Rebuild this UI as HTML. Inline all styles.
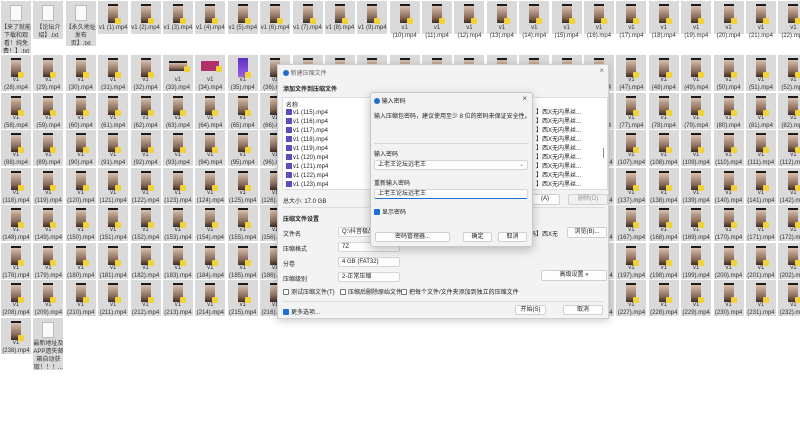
<!DOCTYPE html>
<html><head><meta charset="utf-8"><style>
*{box-sizing:border-box;margin:0;padding:0}
body{width:800px;height:425px;background:#fff;position:relative;overflow:hidden;font-family:"Liberation Sans","Noto Sans CJK SC",sans-serif;}
.row{position:absolute;left:1px;display:flex;align-items:flex-start}
.t{position:relative;width:30px;height:36px;background:#dadada;margin-right:2.4px;flex:none;font-size:6px;text-align:center;line-height:8px;color:#333}
.t b{position:absolute;left:10px;top:3px;width:10px;height:19px;background:linear-gradient(#1a1a1a 0 2px,#d8c0ae 2px,#8a6a58 70%,#3a2a22)}
.t b:after{content:"";position:absolute;right:-3px;bottom:-1px;width:6px;height:6px;background:#f2d23a;border-radius:1px}
.t span{position:absolute;left:0;right:0;top:21px}
.r1 .t{height:33px}
.r1 .t span{top:23px}
.x{background:#dadada}
.x i{position:absolute;left:9px;top:4px;width:12px;height:16px;background:#fafafa;border:1px solid #bbb}
.x span{top:22px}
.dlg{position:absolute;background:#f3f3f3;border:1px solid #cfcfcf;font-size:6px;color:#222}
.ab{position:absolute;white-space:nowrap}
.btn{position:absolute;background:#fdfdfd;border:1px solid #d0d0d0;border-radius:2px;text-align:center;font-size:6px;line-height:9px}
.inp{position:absolute;background:#fdfdfd;border:1px solid #d6d6d6;border-radius:2px;font-size:6px;line-height:8px;padding-left:3px}
.cb{display:inline-block;width:6px;height:6px;border:1px solid #777;border-radius:1px;vertical-align:-1px;margin-right:2px;background:#fff}
.cb.on{background:#1f6fd0;border-color:#1f6fd0}
.ic{display:inline-block;width:6px;height:6px;border-radius:50%;background:#1f6fd0;vertical-align:-1px}
.li{position:absolute;left:3px;font-size:6px;white-space:nowrap}
.li:before{content:"";display:inline-block;width:6px;height:6px;background:#5a4fc0;margin-right:1px;vertical-align:-1px}
</style></head><body>

<div class="row r1" style="top:1px">
<div class="t x" style="height:52px"><i></i><span>【来了就能下载和观看！纯免费！】.txt</span></div>
<div class="t x" style="height:38px"><i></i><span>【论坛介绍】.txt</span></div>
<div class="t x" style="height:45px"><i></i><span>【永久地址发布页】.txt</span></div>
<div class="t"><b></b><span>v1 (1).mp4</span></div><div class="t"><b></b><span>v1 (2).mp4</span></div><div class="t"><b></b><span>v1 (3).mp4</span></div><div class="t"><b></b><span>v1 (4).mp4</span></div><div class="t"><b></b><span>v1 (5).mp4</span></div><div class="t"><b></b><span>v1 (6).mp4</span></div><div class="t"><b></b><span>v1 (7).mp4</span></div><div class="t"><b></b><span>v1 (8).mp4</span></div><div class="t"><b></b><span>v1 (9).mp4</span></div>
<div class="t"><b></b><span>v1<br>(10).mp4</span></div><div class="t"><b></b><span>v1<br>(11).mp4</span></div><div class="t"><b></b><span>v1<br>(12).mp4</span></div><div class="t"><b></b><span>v1<br>(13).mp4</span></div><div class="t"><b></b><span>v1<br>(14).mp4</span></div><div class="t"><b></b><span>v1<br>(15).mp4</span></div><div class="t"><b></b><span>v1<br>(16).mp4</span></div><div class="t"><b></b><span>v1<br>(17).mp4</span></div><div class="t"><b></b><span>v1<br>(18).mp4</span></div><div class="t"><b></b><span>v1<br>(19).mp4</span></div><div class="t"><b></b><span>v1<br>(20).mp4</span></div><div class="t"><b></b><span>v1<br>(21).mp4</span></div><div class="t"><b></b><span>v1<br>(22).mp4</span></div>
</div>

<div class="row" style="top:55px">
<div class="t"><b></b><span>v1<br>(28).mp4</span></div><div class="t"><b></b><span>v1<br>(29).mp4</span></div><div class="t"><b></b><span>v1<br>(30).mp4</span></div><div class="t"><b></b><span>v1<br>(31).mp4</span></div><div class="t"><b></b><span>v1<br>(32).mp4</span></div><div class="t"><b style="left:6px;top:6px;width:18px;height:10px"></b><span>v1<br>(33).mp4</span></div><div class="t"><b style="left:6px;top:6px;width:18px;height:10px;background:#b0306a"></b><span>v1<br>(34).mp4</span></div><div class="t"><b style="background:linear-gradient(#5a30c0,#9a60e0)"></b><span>v1<br>(35).mp4</span></div><div class="t"><b></b><span>v1<br>(36).mp4</span></div><div class="t"><b></b><span>v1<br>(37).mp4</span></div><div class="t"><b></b><span>v1<br>(38).mp4</span></div><div class="t"><b></b><span>v1<br>(39).mp4</span></div><div class="t"><b></b><span>v1<br>(40).mp4</span></div><div class="t"><b></b><span>v1<br>(41).mp4</span></div><div class="t"><b></b><span>v1<br>(42).mp4</span></div><div class="t"><b></b><span>v1<br>(43).mp4</span></div><div class="t"><b></b><span>v1<br>(44).mp4</span></div><div class="t"><b></b><span>v1<br>(45).mp4</span></div><div class="t"><b></b><span>v1<br>(46).mp4</span></div><div class="t"><b></b><span>v1<br>(47).mp4</span></div><div class="t"><b></b><span>v1<br>(48).mp4</span></div><div class="t"><b></b><span>v1<br>(49).mp4</span></div><div class="t"><b></b><span>v1<br>(50).mp4</span></div><div class="t"><b></b><span>v1<br>(51).mp4</span></div><div class="t"><b></b><span>v1<br>(52).mp4</span></div>
</div>

<div class="row" style="top:92.5px">
<div class="t"><b></b><span>v1<br>(58).mp4</span></div><div class="t"><b></b><span>v1<br>(59).mp4</span></div><div class="t"><b></b><span>v1<br>(60).mp4</span></div><div class="t"><b></b><span>v1<br>(61).mp4</span></div><div class="t"><b></b><span>v1<br>(62).mp4</span></div><div class="t"><b></b><span>v1<br>(63).mp4</span></div><div class="t"><b></b><span>v1<br>(64).mp4</span></div><div class="t"><b></b><span>v1<br>(65).mp4</span></div><div class="t"><b></b><span>v1<br>(66).mp4</span></div><div class="t"><b></b><span>v1<br>(67).mp4</span></div><div class="t"><b></b><span>v1<br>(68).mp4</span></div><div class="t"><b></b><span>v1<br>(69).mp4</span></div><div class="t"><b></b><span>v1<br>(70).mp4</span></div><div class="t"><b></b><span>v1<br>(71).mp4</span></div><div class="t"><b></b><span>v1<br>(72).mp4</span></div><div class="t"><b></b><span>v1<br>(73).mp4</span></div><div class="t"><b></b><span>v1<br>(74).mp4</span></div><div class="t"><b></b><span>v1<br>(75).mp4</span></div><div class="t"><b></b><span>v1<br>(76).mp4</span></div><div class="t"><b></b><span>v1<br>(77).mp4</span></div><div class="t"><b></b><span>v1<br>(78).mp4</span></div><div class="t"><b></b><span>v1<br>(79).mp4</span></div><div class="t"><b></b><span>v1<br>(80).mp4</span></div><div class="t"><b></b><span>v1<br>(81).mp4</span></div><div class="t"><b></b><span>v1<br>(82).mp4</span></div>
</div>

<div class="row" style="top:130px">
<div class="t"><b></b><span>v1<br>(88).mp4</span></div><div class="t"><b></b><span>v1<br>(89).mp4</span></div><div class="t"><b></b><span>v1<br>(90).mp4</span></div><div class="t"><b></b><span>v1<br>(91).mp4</span></div><div class="t"><b></b><span>v1<br>(92).mp4</span></div><div class="t"><b></b><span>v1<br>(93).mp4</span></div><div class="t"><b></b><span>v1<br>(94).mp4</span></div><div class="t"><b></b><span>v1<br>(95).mp4</span></div><div class="t"><b></b><span>v1<br>(96).mp4</span></div><div class="t"><b></b><span>v1<br>(97).mp4</span></div><div class="t"><b></b><span>v1<br>(98).mp4</span></div><div class="t"><b></b><span>v1<br>(99).mp4</span></div><div class="t"><b></b><span>v1<br>(100).mp4</span></div><div class="t"><b></b><span>v1<br>(101).mp4</span></div><div class="t"><b></b><span>v1<br>(102).mp4</span></div><div class="t"><b></b><span>v1<br>(103).mp4</span></div><div class="t"><b></b><span>v1<br>(104).mp4</span></div><div class="t"><b></b><span>v1<br>(105).mp4</span></div><div class="t"><b></b><span>v1<br>(106).mp4</span></div><div class="t"><b></b><span>v1<br>(107).mp4</span></div><div class="t"><b></b><span>v1<br>(108).mp4</span></div><div class="t"><b></b><span>v1<br>(109).mp4</span></div><div class="t"><b></b><span>v1<br>(110).mp4</span></div><div class="t"><b></b><span>v1<br>(111).mp4</span></div><div class="t"><b></b><span>v1<br>(112).mp4</span></div>
</div>

<div class="row" style="top:167.5px">
<div class="t"><b></b><span>v1<br>(118).mp4</span></div><div class="t"><b></b><span>v1<br>(119).mp4</span></div><div class="t"><b></b><span>v1<br>(120).mp4</span></div><div class="t"><b></b><span>v1<br>(121).mp4</span></div><div class="t"><b></b><span>v1<br>(122).mp4</span></div><div class="t"><b></b><span>v1<br>(123).mp4</span></div><div class="t"><b></b><span>v1<br>(124).mp4</span></div><div class="t"><b></b><span>v1<br>(125).mp4</span></div><div class="t"><b></b><span>v1<br>(126).mp4</span></div><div class="t"><b></b><span>v1<br>(127).mp4</span></div><div class="t"><b></b><span>v1<br>(128).mp4</span></div><div class="t"><b></b><span>v1<br>(129).mp4</span></div><div class="t"><b></b><span>v1<br>(130).mp4</span></div><div class="t"><b></b><span>v1<br>(131).mp4</span></div><div class="t"><b></b><span>v1<br>(132).mp4</span></div><div class="t"><b></b><span>v1<br>(133).mp4</span></div><div class="t"><b></b><span>v1<br>(134).mp4</span></div><div class="t"><b></b><span>v1<br>(135).mp4</span></div><div class="t"><b></b><span>v1<br>(136).mp4</span></div><div class="t"><b></b><span>v1<br>(137).mp4</span></div><div class="t"><b></b><span>v1<br>(138).mp4</span></div><div class="t"><b></b><span>v1<br>(139).mp4</span></div><div class="t"><b></b><span>v1<br>(140).mp4</span></div><div class="t"><b></b><span>v1<br>(141).mp4</span></div><div class="t"><b></b><span>v1<br>(142).mp4</span></div>
</div>

<div class="row" style="top:205px">
<div class="t"><b></b><span>v1<br>(148).mp4</span></div><div class="t"><b></b><span>v1<br>(149).mp4</span></div><div class="t"><b></b><span>v1<br>(150).mp4</span></div><div class="t"><b></b><span>v1<br>(151).mp4</span></div><div class="t"><b></b><span>v1<br>(152).mp4</span></div><div class="t"><b></b><span>v1<br>(153).mp4</span></div><div class="t"><b></b><span>v1<br>(154).mp4</span></div><div class="t"><b></b><span>v1<br>(155).mp4</span></div><div class="t"><b></b><span>v1<br>(156).mp4</span></div><div class="t"><b></b><span>v1<br>(157).mp4</span></div><div class="t"><b></b><span>v1<br>(158).mp4</span></div><div class="t"><b></b><span>v1<br>(159).mp4</span></div><div class="t"><b></b><span>v1<br>(160).mp4</span></div><div class="t"><b></b><span>v1<br>(161).mp4</span></div><div class="t"><b></b><span>v1<br>(162).mp4</span></div><div class="t"><b></b><span>v1<br>(163).mp4</span></div><div class="t"><b></b><span>v1<br>(164).mp4</span></div><div class="t"><b></b><span>v1<br>(165).mp4</span></div><div class="t"><b></b><span>v1<br>(166).mp4</span></div><div class="t"><b></b><span>v1<br>(167).mp4</span></div><div class="t"><b></b><span>v1<br>(168).mp4</span></div><div class="t"><b></b><span>v1<br>(169).mp4</span></div><div class="t"><b></b><span>v1<br>(170).mp4</span></div><div class="t"><b></b><span>v1<br>(171).mp4</span></div><div class="t"><b></b><span>v1<br>(172).mp4</span></div>
</div>

<div class="row" style="top:242.5px">
<div class="t"><b></b><span>v1<br>(178).mp4</span></div><div class="t"><b></b><span>v1<br>(179).mp4</span></div><div class="t"><b></b><span>v1<br>(180).mp4</span></div><div class="t"><b></b><span>v1<br>(181).mp4</span></div><div class="t"><b></b><span>v1<br>(182).mp4</span></div><div class="t"><b></b><span>v1<br>(183).mp4</span></div><div class="t"><b></b><span>v1<br>(184).mp4</span></div><div class="t"><b></b><span>v1<br>(185).mp4</span></div><div class="t"><b></b><span>v1<br>(186).mp4</span></div><div class="t"><b></b><span>v1<br>(187).mp4</span></div><div class="t"><b></b><span>v1<br>(188).mp4</span></div><div class="t"><b></b><span>v1<br>(189).mp4</span></div><div class="t"><b></b><span>v1<br>(190).mp4</span></div><div class="t"><b></b><span>v1<br>(191).mp4</span></div><div class="t"><b></b><span>v1<br>(192).mp4</span></div><div class="t"><b></b><span>v1<br>(193).mp4</span></div><div class="t"><b></b><span>v1<br>(194).mp4</span></div><div class="t"><b></b><span>v1<br>(195).mp4</span></div><div class="t"><b></b><span>v1<br>(196).mp4</span></div><div class="t"><b></b><span>v1<br>(197).mp4</span></div><div class="t"><b></b><span>v1<br>(198).mp4</span></div><div class="t"><b></b><span>v1<br>(199).mp4</span></div><div class="t"><b></b><span>v1<br>(200).mp4</span></div><div class="t"><b></b><span>v1<br>(201).mp4</span></div><div class="t"><b></b><span>v1<br>(202).mp4</span></div>
</div>

<div class="row" style="top:280px">
<div class="t"><b></b><span>v1<br>(208).mp4</span></div><div class="t"><b></b><span>v1<br>(209).mp4</span></div><div class="t"><b></b><span>v1<br>(210).mp4</span></div><div class="t"><b></b><span>v1<br>(211).mp4</span></div><div class="t"><b></b><span>v1<br>(212).mp4</span></div><div class="t"><b></b><span>v1<br>(213).mp4</span></div><div class="t"><b></b><span>v1<br>(214).mp4</span></div><div class="t"><b></b><span>v1<br>(215).mp4</span></div><div class="t"><b></b><span>v1<br>(216).mp4</span></div><div class="t"><b></b><span>v1<br>(217).mp4</span></div><div class="t"><b></b><span>v1<br>(218).mp4</span></div><div class="t"><b></b><span>v1<br>(219).mp4</span></div><div class="t"><b></b><span>v1<br>(220).mp4</span></div><div class="t"><b></b><span>v1<br>(221).mp4</span></div><div class="t"><b></b><span>v1<br>(222).mp4</span></div><div class="t"><b></b><span>v1<br>(223).mp4</span></div><div class="t"><b></b><span>v1<br>(224).mp4</span></div><div class="t"><b></b><span>v1<br>(225).mp4</span></div><div class="t"><b></b><span>v1<br>(226).mp4</span></div><div class="t"><b></b><span>v1<br>(227).mp4</span></div><div class="t"><b></b><span>v1<br>(228).mp4</span></div><div class="t"><b></b><span>v1<br>(229).mp4</span></div><div class="t"><b></b><span>v1<br>(230).mp4</span></div><div class="t"><b></b><span>v1<br>(231).mp4</span></div><div class="t"><b></b><span>v1<br>(232).mp4</span></div>
</div>

<div class="row" style="top:317.5px">
<div class="t"><b></b><span>v1<br>(238).mp4</span></div>
<div class="t x" style="height:52px"><i></i><span>最新地址及APP遗失邮箱自动获取！！！...</span></div>
</div>

<!-- main dialog -->
<div class="dlg" style="left:277px;top:64px;width:332px;height:255px;box-shadow:0 2px 8px rgba(0,0,0,.2)">
  <div class="ab" style="left:5px;top:3px"><span class="ic"></span> <span style="color:#666">新建压缩文件</span></div>
  <div class="ab" style="right:4px;top:1px;font-size:8px;color:#777">×</div>
  <div class="ab" style="left:5px;top:19px;font-weight:bold">添加文件到压缩文件</div>
  <div style="position:absolute;left:4px;top:32px;width:326px;height:93px;background:#fff;border:1px solid #ddd">
    <div class="ab" style="left:3px;top:2px">名称</div>
    <div class="li" style="top:11px">v1 (115).mp4</div>
    <div class="li" style="top:20px">v1 (116).mp4</div>
    <div class="li" style="top:29px">v1 (117).mp4</div>
    <div class="li" style="top:38px">v1 (118).mp4</div>
    <div class="li" style="top:47px">v1 (119).mp4</div>
    <div class="li" style="top:56px">v1 (120).mp4</div>
    <div class="li" style="top:65px">v1 (121).mp4</div>
    <div class="li" style="top:74px">v1 (122).mp4</div>
    <div class="li" style="top:83px">v1 (123).mp4</div>
    <div class="ab" style="left:253px;top:11px;line-height:9px">】西X无内黑丝...<br>】西X无内黑丝...<br>】西X无内黑丝...<br>】西X无内黑丝...<br>】西X无内黑丝...<br>】西X无内黑丝...<br>】西X无内黑丝...<br>】西X无内黑丝...<br>】西X无内黑丝...</div>
    <div style="position:absolute;right:3px;top:50px;width:1px;height:10px;background:#888"></div>
  </div>
  <div class="ab" style="left:5px;top:131px">总大小: 17.0 GB</div>
  <div class="btn" style="left:252px;top:129px;width:30px;height:11px">(A)</div>
  <div class="btn" style="left:290px;top:129px;width:40px;height:11px;color:#999;background:#f0f0f0">删除(D)</div>
  <div style="position:absolute;left:4px;right:4px;top:142px;height:1px;background:#ddd"></div>
  <div class="ab" style="left:5px;top:149px;font-weight:bold">压缩文件设置</div>
  <div class="ab" style="left:5px;top:164px">文件名</div>
  <div class="ab" style="left:5px;top:179px">压缩格式</div>
  <div class="ab" style="left:5px;top:194px">分卷</div>
  <div class="ab" style="left:5px;top:209px">压缩级别</div>
  <div class="inp" style="left:60px;top:162px;width:40px;height:10px">Q:\抖音极品\</div>
  <div class="inp" style="left:60px;top:177px;width:62px;height:10px">7Z</div>
  <div class="inp" style="left:60px;top:192px;width:62px;height:10px">4 GB (FAT32)</div>
  <div class="inp" style="left:60px;top:207px;width:62px;height:10px">2-正常压缩</div>
  <div class="ab" style="left:252px;top:164px">码】西X无</div>
  <div class="btn" style="left:289px;top:162px;width:40px;height:11px">浏览(B)...</div>
  <div class="btn" style="left:263px;top:205px;width:66px;height:11px">高级设置 »</div>
  <div class="ab" style="left:5px;top:222px"><span class="cb"></span>测试压缩文件(T)</div>
  <div class="ab" style="left:62px;top:222px"><span class="cb"></span>压缩后删除原始文件</div>
  <div class="ab" style="left:123px;top:222px"><span class="cb"></span>把每个文件/文件夹添加到独立的压缩文件</div>
  <div style="position:absolute;left:4px;right:4px;top:236px;height:1px;background:#ddd"></div>
  <div class="ab" style="left:5px;top:242px"><span class="cb on"></span>更多选项...</div>
  <div class="btn" style="left:237px;top:240px;width:31px;height:10px">开始(S)</div>
  <div class="btn" style="left:285px;top:240px;width:40px;height:10px">取消</div>
</div>

<!-- password dialog -->
<div class="dlg" style="left:370px;top:92px;width:163px;height:155px;background:#f2f2f2;border-color:#c8c8c8;border-radius:3px;box-shadow:0 3px 10px rgba(0,0,0,.25)">
  <div class="ab" style="left:3px;top:3px"><span class="ic"></span> 输入密码</div>
  <div class="ab" style="right:5px;top:1px;font-size:8px;color:#555">×</div>
  <div class="ab" style="left:3px;top:18px">输入压缩包密码，建议使用至少 8 位的密码来保证安全性。</div>
  <div style="position:absolute;left:3px;right:3px;top:50px;height:1px;background:#d8d8d8"></div>
  <div class="ab" style="left:3px;top:56px">输入密码</div>
  <div class="inp" style="left:3px;top:67px;width:154px;height:10px">上老王论坛远老王<span style="position:absolute;right:3px;color:#888">⌄</span></div>
  <div class="ab" style="left:3px;top:85px">重新输入密码</div>
  <div class="inp" style="left:3px;top:96px;width:154px;height:10px;border-bottom:1px solid #1f6fd0">上老王论坛远老王</div>
  <div class="ab" style="left:3px;top:114px"><span class="cb on"></span>显示密码</div>
  <div class="btn" style="left:4px;top:139px;width:75px;height:10px">密码管理器...</div>
  <div class="btn" style="left:92px;top:139px;width:29px;height:10px">确定</div>
  <div class="btn" style="left:127px;top:139px;width:29px;height:10px">取消</div>
</div>
</body></html>
